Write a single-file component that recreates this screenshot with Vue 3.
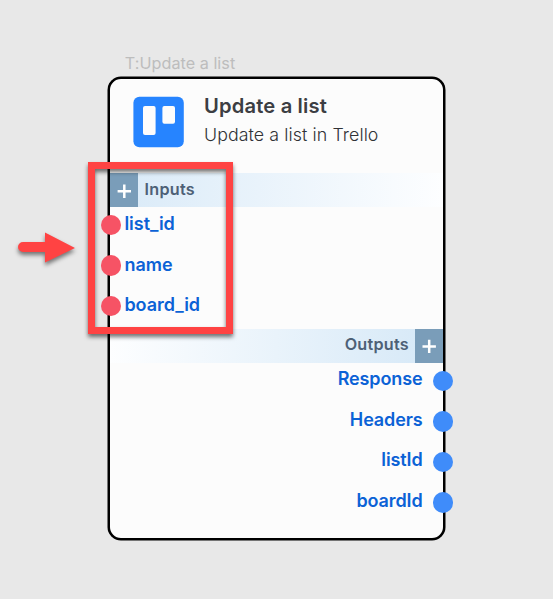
<script setup>
const inputs = ['list_id', 'name', 'board_id']
const outputs = ['Response', 'Headers', 'listId', 'boardId']
</script>

<template>
  <main class="canvas">
    <div class="caption">T:Update a list</div>
    <section class="node">
      <header class="head">
        <svg class="logo" viewBox="0 0 51 52">
          <rect x="0.4" y="0.7" width="50.4" height="50.6" rx="6" fill="#2684ff" />
          <rect x="10" y="10.1" width="12.6" height="29" rx="2" fill="#fcfcfc" />
          <rect x="29.4" y="10.1" width="12.6" height="17.7" rx="2" fill="#fcfcfc" />
        </svg>
        <div class="titles">
          <h1>Update a list</h1>
          <p>Update a list in Trello</p>
        </div>
      </header>

      <div class="bar bar-in">
        <button class="add" aria-label="Add input">
          <svg viewBox="0 0 28 34"><path d="M7.6 18.2H21M14.3 11.5V24.9" /></svg>
        </button>
        <span>Inputs</span>
      </div>
      <ul class="ports ports-in">
        <li v-for="p in inputs" :key="p"><i class="dot"></i><span>{{ p }}</span></li>
      </ul>

      <div class="bar bar-out">
        <span>Outputs</span>
        <button class="add" aria-label="Add output">
          <svg viewBox="0 0 28 34"><path d="M7.5 17.4H20.9M14.2 10.7V24.1" /></svg>
        </button>
      </div>
      <ul class="ports ports-out">
        <li v-for="p in outputs" :key="p"><span>{{ p }}</span><i class="dot"></i></li>
      </ul>
    </section>

    <div class="highlight"></div>
    <svg class="arrow" viewBox="0 0 80 60">
      <path d="M13 22H35V12.5L65 28L35 42.5V32H13A5 5 0 0 1 13 22Z" fill="#ff4343" />
    </svg>
  </main>
</template>

<style>
body { margin: 0; background: #e8e8e8; }
</style>

<style scoped>
.canvas {
  position: relative;
  box-sizing: border-box;
  width: 553px;
  height: 599px;
  padding: 51px 108px 0;
  overflow: hidden;
  background: #e8e8e8;
  font-family: Inter, "Liberation Sans", sans-serif;
}
.caption {
  height: 26px;
  padding-left: 16.8px;
  font-size: 16.2px;
  line-height: 24px;
  letter-spacing: 0.03px;
  color: #bdbdbd;
  white-space: nowrap;
}
.node {
  box-sizing: border-box;
  width: 337px;
  height: 463px;
  border: 2px solid #000;
  border-radius: 13px;
  background: #fcfcfc;
  box-shadow: 0 0 0 0.5px #000;
}
.head {
  display: flex;
  box-sizing: border-box;
  height: 94px;
  padding: 17px 0 0 23px;
}
.logo { width: 51px; height: 52px; flex: none; }
.titles { margin-left: 20px; white-space: nowrap; }
h1 {
  margin: -4px 0 0;
  font-size: 20.2px;
  line-height: 28px;
  font-weight: 600;
  letter-spacing: 0.15px;
  color: #3c3e43;
}
p {
  margin: 1px 0 0;
  font-size: 17.8px;
  line-height: 28px;
  font-weight: 300;
  letter-spacing: 0.09px;
  color: #303236;
}
.bar {
  display: flex;
  align-items: center;
  height: 34px;
  font-size: 16.2px;
  font-weight: 600;
  letter-spacing: 0.26px;
  color: #4d6076;
}
.bar span { height: 34px; line-height: 32px; }
.bar-in { background: linear-gradient(90deg, #d9eaf8, #fdfeff); }
.bar-in span { margin-left: 6.5px; }
.bar-out {
  justify-content: flex-end;
  background: linear-gradient(270deg, #d5e8f7, #fdfeff);
}
.bar-out span { margin-right: 6px; line-height: 31px; }
.add {
  width: 28px;
  height: 34px;
  padding: 0;
  border: 0;
  background: #7a9db9;
}
.add svg { display: block; width: 28px; height: 34px; }
.add path { fill: none; stroke: #fff; stroke-width: 2.5; }
.ports { margin: -2px 0 0; padding: 0; list-style: none; }
.ports li {
  display: flex;
  align-items: center;
  height: 40.45px;
  font-size: 18px;
  font-weight: 600;
  line-height: 22px;
  color: #0b62d6;
}
.dot { width: 20.4px; height: 20.4px; border-radius: 50%; flex: none; }
.ports-in { height: 124px; }
.ports-in li { margin-left: -9px; }
.ports-in .dot { background: #f65365; margin-right: 3px; }
.ports-in span { padding-bottom: 1.8px; }
.ports-out li {
  justify-content: flex-end;
  margin-right: -10.3px;
  letter-spacing: -0.1px;
}
.ports-out .dot { background: #3f8cfa; margin-left: 10.3px; }
.ports-out span { padding-bottom: 3.6px; }
.highlight {
  position: absolute;
  left: 88px;
  top: 162px;
  box-sizing: border-box;
  width: 145px;
  height: 172px;
  border: 7px solid #ff4343;
  filter: drop-shadow(0 3px 2px rgba(0, 0, 0, 0.55));
}
.arrow {
  position: absolute;
  left: 10px;
  top: 220px;
  width: 80px;
  height: 60px;
  filter: drop-shadow(0 3px 2px rgba(0, 0, 0, 0.5));
}
</style>
